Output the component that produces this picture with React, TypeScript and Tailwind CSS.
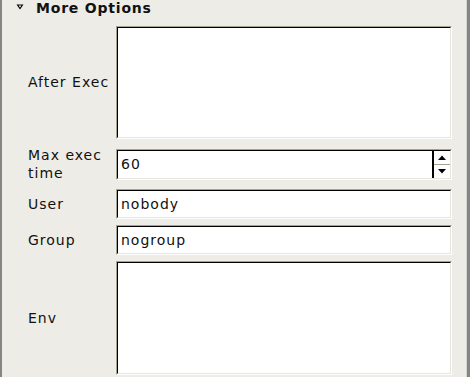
import React from "react";

const font = { fontFamily: '"DejaVu Sans", "Liberation Sans", sans-serif' };

function Sunken({ className, children }: { className?: string; children?: React.ReactNode }) {
  return (
    <div className={`border border-t-[#a4a492] border-l-[#a4a492] border-b-white border-r-white ${className ?? ""}`}>
      <div className="h-full border border-t-black border-l-black border-b-[#e6e6de] border-r-[#e6e6de] bg-white flex items-center">
        {children}
      </div>
    </div>
  );
}

export default function App() {
  return (
    <div
      className="w-[470px] h-[377px] overflow-hidden bg-[#edece6] flex text-[14px] tracking-[1px] text-[#111]"
      style={font}
    >
      <div className="w-[2px] bg-[#858585]" />
      <div className="flex-1 flex flex-col">
        {/* expander header */}
        <div className="h-[16px] flex items-center pl-[14px]">
          <svg width="8" height="6" viewBox="0 0 8 6" className="mr-[12px] -mt-[3px]">
            <path d="M0.5 0.5 H7.5 L4 5.5 Z" fill="#000" />
            <path d="M2.6 1.6 H5.4 L4 3.6 Z" fill="#fff" />
          </svg>
          <span className="font-bold text-[14px] tracking-[0.8px] leading-none">More Options</span>
        </div>

        <div className="grid grid-cols-[114px_336px] gap-y-[6px] mt-[10px]">
          <div className="flex items-center pl-[26px]">After Exec</div>
          <Sunken className="h-[113px]" />

          <div className="flex flex-col justify-center pl-[26px] leading-[18px] h-[38px]">
            <span>Max exec</span>
            <span>time</span>
          </div>
          <div className="flex items-center">
            <Sunken className="h-[31px] w-full">
              <span className="flex-1 pl-[3px]">60</span>
              <div className="h-full w-[18px] border-l-2 border-black flex flex-col">
                <div className="flex-1 flex items-center justify-center border-b border-[#a4a492]">
                  <svg width="8" height="5" viewBox="0 0 8 5">
                    <path d="M0 5 L4 0.5 L8 5 Z" fill="#000" />
                  </svg>
                </div>
                <div className="flex-1 flex items-center justify-center">
                  <svg width="8" height="5" viewBox="0 0 8 5">
                    <path d="M0 0 L4 4.5 L8 0 Z" fill="#000" />
                  </svg>
                </div>
              </div>
            </Sunken>
          </div>

          <div className="flex items-center pl-[26px]">User</div>
          <Sunken className="h-[30px]">
            <span className="pl-[3px]">nobody</span>
          </Sunken>

          <div className="flex items-center pl-[26px]">Group</div>
          <Sunken className="h-[30px]">
            <span className="pl-[3px]">nogroup</span>
          </Sunken>

          <div className="flex items-center pl-[26px]">Env</div>
          <Sunken className="h-[114px]" />
        </div>
      </div>
      <div className="w-[1px] bg-[#d6d6ce]" />
      <div className="w-[3px] bg-[#858585]" />
    </div>
  );
}
